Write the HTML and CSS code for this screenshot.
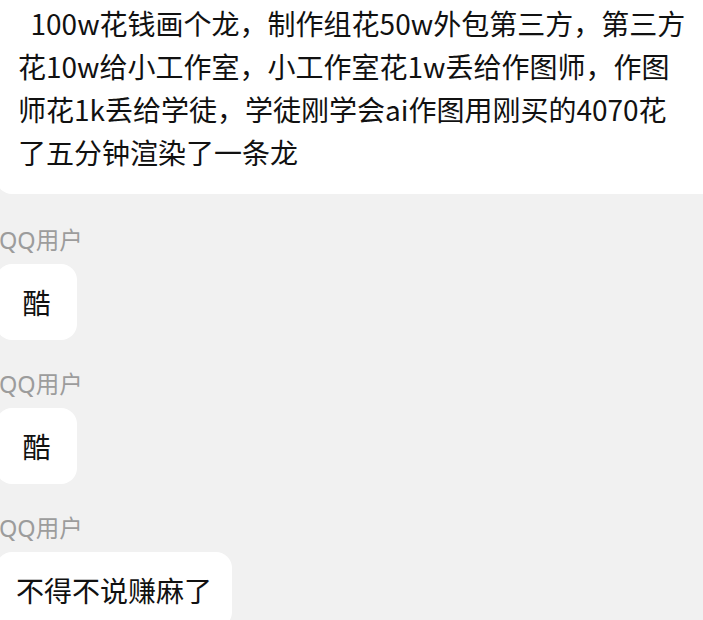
FILE: index.html
```html
<!DOCTYPE html>
<html lang="zh-CN">
<head>
<meta charset="utf-8">
<link rel="stylesheet" href="styles.css">
</head>
<body>
<div class="feed">
  <div class="post">&nbsp;&nbsp;100w花钱画个龙，制作组花50w外包第三方，第三方花10w给小工作室，小工作室花1w丢给作图师，作图师花1k丢给学徒，学徒刚学会ai作图用刚买的4070花了五分钟渲染了一条龙</div>
  <div class="msg">
    <div class="name">QQ用户</div>
    <div class="bubble">酷</div>
  </div>
  <div class="msg">
    <div class="name">QQ用户</div>
    <div class="bubble">酷</div>
  </div>
  <div class="msg">
    <div class="name">QQ用户</div>
    <div class="bubble">不得不说赚麻了</div>
  </div>
</div>
</body>
</html>
```
FILE: styles.css
```css
html, body {
  margin: 0;
  padding: 0;
  background: #f1f1f1;
  overflow: hidden;
}
body {
  font-family: "Noto Sans CJK SC", "Noto Sans", sans-serif;
  color: #111;
}
.feed {
  margin-top: -18px;
  margin-left: -4px;
  margin-right: -20px;
  display: flex;
  flex-direction: column;
}
.post {
  background: #fff;
  border-radius: 0 0 16px 16px;
  padding: 20px 30px 20px 22px;
  margin-bottom: 2px;
  font-size: 28px;
  line-height: 43px;
}
.msg {
  display: flex;
  flex-direction: column;
  align-items: flex-start;
  margin-top: 28px;
}
.name {
  font-family: "Noto Sans", "Noto Sans CJK SC", sans-serif;
  font-size: 23.5px;
  line-height: 32px;
  color: #9c9c9c;
  padding-left: 3px;
  margin-bottom: 8px;
}
.bubble {
  background: #fff;
  border-radius: 16px;
  min-width: 41px;
  text-align: center;
  padding: 16px 20px;
  font-size: 28px;
  line-height: 44px;
}
```
